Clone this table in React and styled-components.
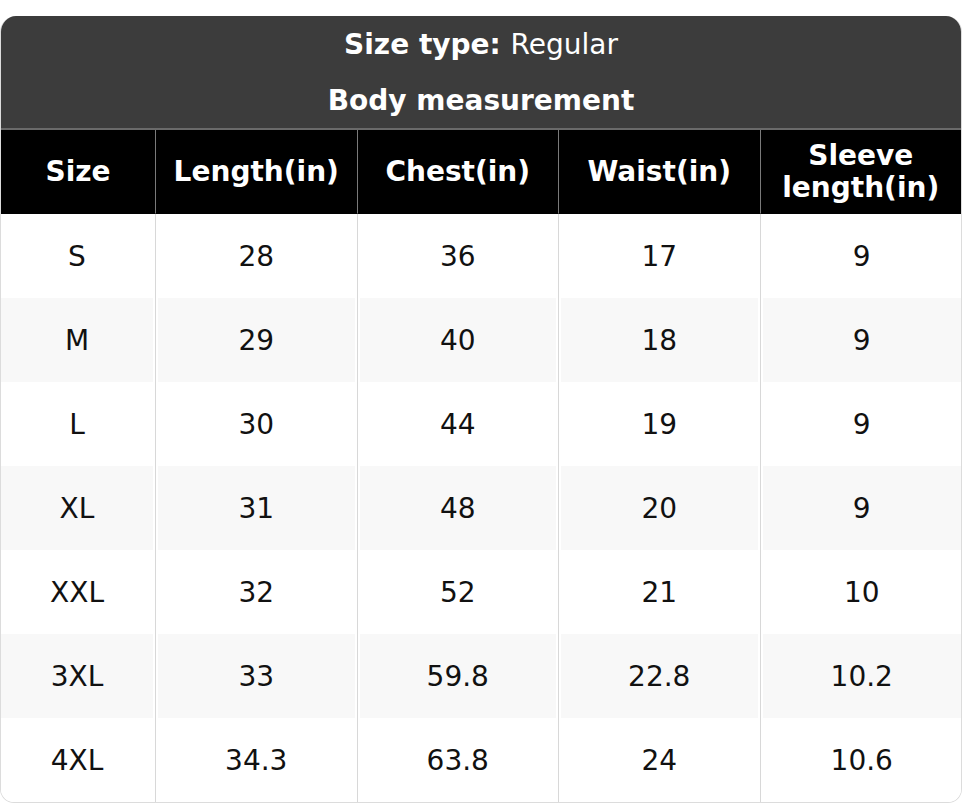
import React from 'react';
import styled, { createGlobalStyle } from 'styled-components';

const GlobalStyle = createGlobalStyle`
  body {
    margin: 0;
    background: #ffffff;
    font-family: "DejaVu Sans", "Liberation Sans", sans-serif;
  }
`;

const columns = ['Size', 'Length(in)', 'Chest(in)', 'Waist(in)', 'Sleeve length(in)'];

const rows = [
  ['S', '28', '36', '17', '9'],
  ['M', '29', '40', '18', '9'],
  ['L', '30', '44', '19', '9'],
  ['XL', '31', '48', '20', '9'],
  ['XXL', '32', '52', '21', '10'],
  ['3XL', '33', '59.8', '22.8', '10.2'],
  ['4XL', '34.3', '63.8', '24', '10.6'],
];

const Page = styled.div`
  padding-top: 16px;
`;

const Card = styled.div`
  width: 962px;
  box-sizing: border-box;
  border: 1px solid #dcdcdc;
  border-top: none;
  border-radius: 16px 16px 14px 14px;
  overflow: hidden;
`;

const Table = styled.table`
  width: 100%;
  border-collapse: separate;
  border-spacing: 0;
  table-layout: fixed;
`;

const TitleCell = styled.th`
  height: 56px;
  padding: 0;
  background: #3c3c3c;
  color: #ffffff;
  font-size: 28px;
  font-weight: 700;
  text-align: center;
  border-bottom: ${({ $last }) => ($last ? '2px solid #6a6a6a' : 'none')};

  span {
    font-weight: 400;
  }
`;

const HeadCell = styled.th`
  height: 83px;
  padding: 0 4px;
  background: #000000;
  color: #ffffff;
  font-size: 28px;
  font-weight: 700;
  line-height: 32px;
  text-align: center;
  border-left: ${({ $first }) => ($first ? 'none' : '1px solid #7a7a7a')};
  border-bottom: 1px solid #000;
`;

const Cell = styled.td`
  height: 84px;
  padding: 0 2px;
  background: ${({ $odd }) => ($odd ? '#f8f8f8' : '#ffffff')};
  background-clip: content-box;
  color: #111111;
  font-size: 28px;
  text-align: center;
  border-left: 1px solid #d8d8d8;

  &:first-child {
    padding-left: 0;
    border-left: none;
  }

  &:last-child {
    padding-right: 0;
  }
`;

const App = () => {
  return (
    <Page>
      <GlobalStyle />
      <Card>
        <Table>
          <colgroup>
            <col style={{ width: '154px' }} />
            <col />
            <col />
            <col />
            <col />
          </colgroup>
          <thead>
            <tr>
              <TitleCell colSpan={5}>
                Size type: <span>Regular</span>
              </TitleCell>
            </tr>
            <tr>
              <TitleCell colSpan={5} $last>Body measurement</TitleCell>
            </tr>
            <tr>
              {columns.map((c, i) => (
                <HeadCell key={c} $first={i === 0}>{c}</HeadCell>
              ))}
            </tr>
          </thead>
          <tbody>
            {rows.map((r, ri) => (
              <tr key={r[0]}>
                {r.map((v, i) => (
                  <Cell key={i} $odd={ri % 2 === 1}>{v}</Cell>
                ))}
              </tr>
            ))}
          </tbody>
        </Table>
      </Card>
    </Page>
  );
};

export default App;
